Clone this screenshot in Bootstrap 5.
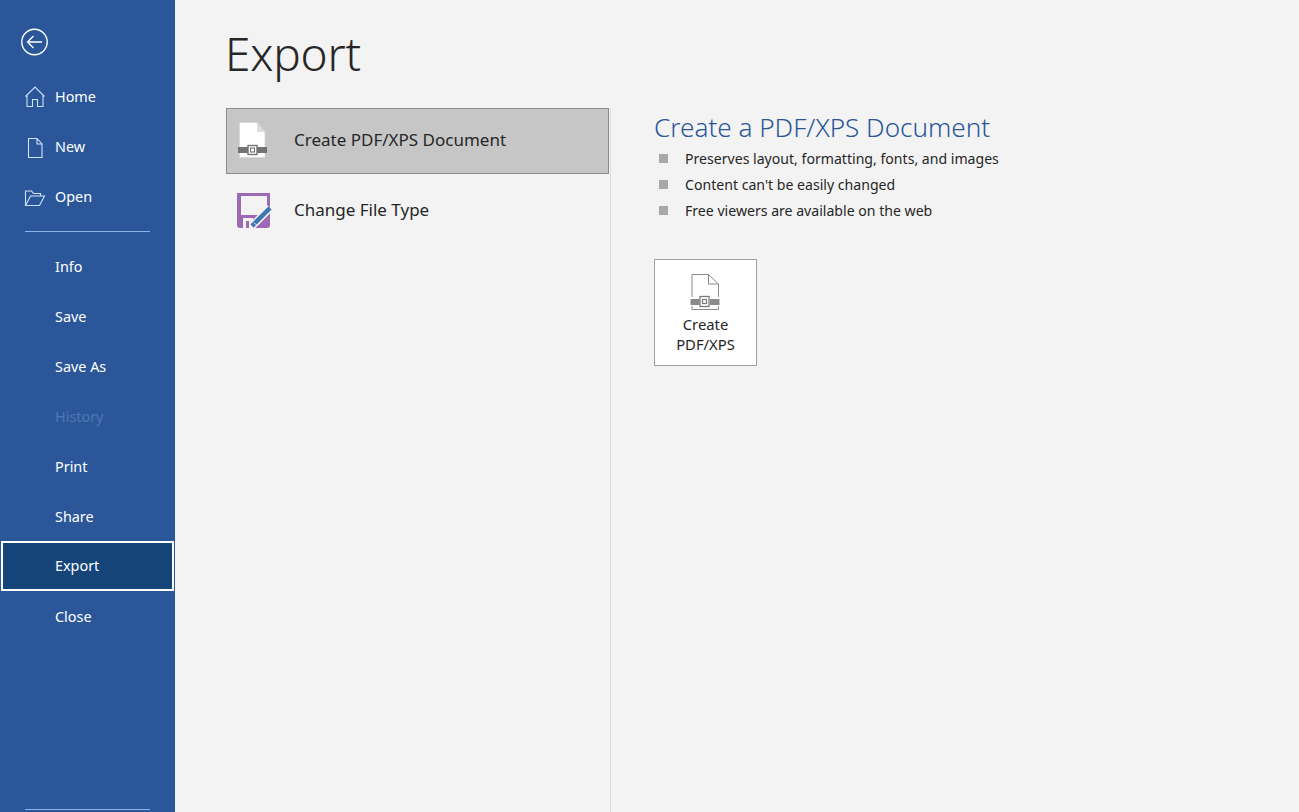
<!DOCTYPE html>
<html lang="en">
<head>
    <meta charset="UTF-8">
    <meta name="viewport" content="width=device-width, initial-scale=1.0">
    <title>Export</title>
    <link href="https://cdn.jsdelivr.net/npm/bootstrap@5.3.0/dist/css/bootstrap.min.css" rel="stylesheet">
    <style>
        html, body { height: 812px; overflow: hidden; }
        body { background: #f3f3f3; font-family: "Noto Sans", "Open Sans", sans-serif; color: #262626; }
        .backstage { width: 175px; height: 812px; background: #2b579a; padding-top: 21px; }
        .back-btn { display: block; margin: 0 0 9px 21px; width: 27px; height: 42px; }
        .side-link { height: 50px; padding-left: 55px; padding-bottom: 1px; color: #fff; font-size: 14.4px; position: relative; display: flex; align-items: center; text-decoration: none; }
        .side-link svg { position: absolute; left: 24px; top: 13px; }
        .side-link.is-off { color: #4f78b3; }
        .side-link.is-current { background: #154479; margin: -1px 1px 1px; padding-left: 52px; padding-bottom: 0; border: 2px solid #fff; }
        .side-rule { height: 1px; margin: 9px 25px 10px 25px; background: #8db4e8; }
        .side-fill { flex: 1; }
        .side-rule-end { margin: 0 25px 2px; }
        .work { padding: 0 0 0 51px; min-width: 0; }
        .page-title { font-size: 46px; font-weight: 300; line-height: 64px; margin: 21px 0 23px -1px; height: 64px; letter-spacing: -.2px; }
        .option-col { width: 385px; border-right: 1px solid #dcdcdc; padding-right: 1px; }
        .option-row { height: 66px; width: 383px; padding: 0 0 2px 10px; font-size: 17px; display: flex; align-items: center; gap: 21px; border: 1px solid transparent; margin-bottom: 4px; }
        .option-row.is-picked { background: #c6c6c6; border-color: #8a8a8a; }
        .detail-col { padding: 0 0 0 43px; }
        .detail-title { font-size: 26.1px; line-height: 36px; color: #2b579a; font-weight: 300; margin: 1px 0 2px; }
        .detail-list { list-style: none; margin: 0 0 34px; padding: 0; font-size: 14.1px; }
        .detail-list li { height: 26px; padding: 0 0 2px 5px; display: flex; align-items: center; gap: 17px; }
        .detail-list li::before { content: ""; width: 9px; height: 9px; background: #a8a8a8; margin-top: -1px; }
        .pdf-btn { width: 103px; height: 107px; background: #fff; border: 1px solid #a0a0a0; border-radius: 0; padding: 13px 0 0; font-size: 14.8px; line-height: 20px; color: #262626; display: flex; flex-direction: column; align-items: center; }
        .pdf-btn svg { margin-bottom: 3px; }
    </style>
</head>
<body>
<div class="d-flex">

    <!-- Left nav -->
    <nav class="backstage d-flex flex-column">
        <a class="back-btn" href="#">
            <svg width="27" height="42" viewBox="0 0 27 42" fill="none" stroke="#fff" stroke-width="1.4"><circle cx="13.5" cy="21" r="12.7"/><path d="M6.5 21h14.500M12.500 15l-6 6 6 6"/></svg>
        </a>
        <a class="side-link" href="#">
            <svg width="22" height="24" viewBox="0 0 22 24" fill="none" stroke="#cfe2fb" stroke-width="1.100"><path d="M1.500 11.500 11 2l9.500 9.500M3 10v11.500h5.500V14.500h5v7H19V10"/></svg>
            Home
        </a>
        <a class="side-link" href="#">
            <svg width="22" height="24" viewBox="0 0 22 24" fill="none" stroke="#cfe2fb" stroke-width="1.100"><path d="M4.500 3.500h8.500l5 5.500v13.500H4.500zM13 3.500V9h5"/></svg>
            New
        </a>
        <a class="side-link" href="#">
            <svg width="22" height="24" viewBox="0 0 22 24" fill="none" stroke="#cfe2fb" stroke-width="1.100"><path d="M1.500 20.500V6h6l2 2.500h7v2.500M1.500 20.500h14l5-9.500H6.500z"/></svg>
            Open
        </a>
        <div class="side-rule"></div>
        <a class="side-link" href="#">Info</a>
        <a class="side-link" href="#">Save</a>
        <a class="side-link" href="#">Save As</a>
        <a class="side-link is-off" href="#">History</a>
        <a class="side-link" href="#">Print</a>
        <a class="side-link" href="#">Share</a>
        <a class="side-link is-current" href="#">Export</a>
        <a class="side-link" href="#">Close</a>
        <div class="side-fill"></div>
        <div class="side-rule side-rule-end"></div>
    </nav>

    <!-- Main area -->
    <main class="work flex-grow-1">
        <h1 class="page-title">Export</h1>
        <div class="d-flex" style="height: 704px">
            <div class="option-col">
                <div class="option-row is-picked">
                    <svg width="36" height="38" viewBox="0 0 36 38"><path d="M2.500 1.500H20l8 9.500v25.500H2.500z" fill="#fff" stroke="#d4d4d4" stroke-width=".7"/><path d="M20 1.500V11h8z" fill="#dcdcdc"/><path d="M1 26h10v6H1zM20 26h10v6H20z" fill="#737373"/><rect x="11" y="24.500" width="9" height="9" fill="#fff" stroke="#737373" stroke-width="1.400"/><rect x="13.500" y="27" width="4" height="4" fill="#fff" stroke="#737373" stroke-width="1.100"/></svg>
                    <span>Create PDF/XPS Document</span>
                </div>
                <div class="option-row">
                    <svg width="36" height="38" viewBox="0 0 36 38"><path d="M0 2h33v32a3 3 0 0 1-3 3H3a3 3 0 0 1-3-3z" fill="#9e69b4"/><path d="M4 5h26v19H4z" fill="#f3f3f3"/><path d="M6 27h10v10H6z" fill="#f3f3f3"/><path d="M9 30h3v7H9z" fill="#9e69b4"/><path d="M15 35 33 17" stroke="#f3f3f3" stroke-width="7.500"/><path d="M15 35 33 17" stroke="#3f76b0" stroke-width="4.500"/><path d="M17 31.500l3 3" stroke="#f3f3f3"/></svg>
                    <span>Change File Type</span>
                </div>
            </div>
            <div class="detail-col">
                <h2 class="detail-title">Create a PDF/XPS Document</h2>
                <ul class="detail-list">
                    <li>Preserves layout, formatting, fonts, and images</li>
                    <li>Content can't be easily changed</li>
                    <li>Free viewers are available on the web</li>
                </ul>
                <button class="btn pdf-btn" type="button">
                    <svg width="32" height="38" viewBox="0 0 32 38" fill="none"><path d="M2 24V1.500h16.500l10 9.500v13M2 33v3.500h26.500V33M18.500 1.500V11h10" stroke="#8a8a8a"/><path d="M.5 26h9v6h-9zM20 26h9.500v6H20z" fill="#8a8a8a"/><rect x="10" y="23.500" width="9" height="10" stroke="#7a7a7a" stroke-width="1.300"/><rect x="12.500" y="26.500" width="4" height="4" stroke="#7a7a7a" stroke-width="1.200"/></svg>
                    <span>Create<br>PDF/XPS</span>
                </button>
            </div>
        </div>
    </main>
</div>
<script src="https://cdn.jsdelivr.net/npm/bootstrap@5.3.0/dist/js/bootstrap.bundle.min.js"></script>
</body>
</html>
